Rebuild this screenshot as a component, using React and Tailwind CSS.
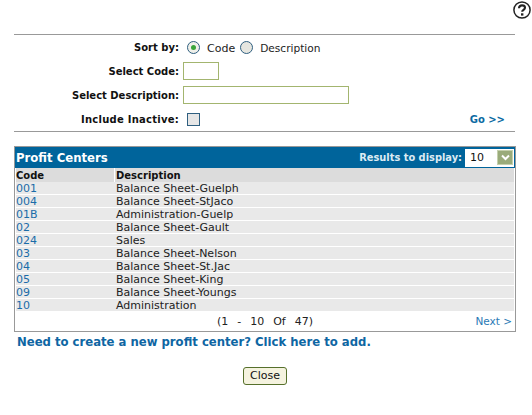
import React from "react";

const rows = [
  ["001", "Balance Sheet-Guelph"],
  ["004", "Balance Sheet-StJaco"],
  ["01B", "Administration-Guelp"],
  ["02", "Balance Sheet-Gault"],
  ["024", "Sales"],
  ["03", "Balance Sheet-Nelson"],
  ["04", "Balance Sheet-St.Jac"],
  ["05", "Balance Sheet-King"],
  ["09", "Balance Sheet-Youngs"],
  ["10", "Administration"],
];

function FormRow({ label, rowClass, labelClass, children }) {
  return (
    <div className={`flex items-center ${rowClass}`}>
      <div className={`w-[165px] text-right font-bold text-[#111] text-[10px] whitespace-nowrap ${labelClass}`}>{label}</div>
      {children}
    </div>
  );
}

function App() {
  return (
    <div className="w-[532px] h-[415px] bg-white overflow-hidden font-['DejaVu_Sans',sans-serif] text-[11px] leading-[13px] text-[#222]">
      {/* Help icon */}
      <div className="flex justify-end h-[34px] pt-[1px] pr-[1px]">
        <svg width="18" height="18" viewBox="0 0 18 18" fill="none">
          <circle cx="9" cy="9" r="8.1" stroke="#222" strokeWidth="1.5" />
          <path d="M6 7.2c0-1.8 1.3-2.8 3-2.8s3 1 3 2.4c0 2-2.8 2.1-2.8 4" stroke="#222" strokeWidth="2.1" />
          <rect x="8" y="12.3" width="2.4" height="2.3" fill="#222" />
        </svg>
      </div>

      <div className="ml-[14px] w-[501px] h-[98px] border-y border-[#999] relative">
        <FormRow label="Sort by:" rowClass="h-[24px]">
          <div className="flex items-center ml-[8px]">
            <span className="w-[13px] h-[13px] rounded-full border border-[#2f5f80] bg-[#f0f0ea] flex items-center justify-center">
              <span className="w-[5px] h-[5px] rounded-full bg-[#3aa53a]" />
            </span>
            <span className="ml-[7px] mt-[2px]">Code</span>
            <span className="ml-[5px] w-[13px] h-[13px] rounded-full border border-[#2f5f80] bg-[#e6e6e0]" />
            <span className="ml-[7px] mt-[2px] text-[10.6px]">Description</span>
          </div>
        </FormRow>
        <FormRow label="Select Code:" rowClass="h-[24px]">
          <div className="ml-[4px] w-[36px] h-[18px] border border-[#a3b56f] bg-white" />
        </FormRow>
        <FormRow label="Select Description:" rowClass="h-[24px]">
          <div className="ml-[4px] w-[166px] h-[18px] border border-[#a3b56f] bg-white" />
        </FormRow>
        <div className="flex items-center justify-between h-[24px]">
          <FormRow label="Include Inactive:" rowClass="" labelClass="tracking-[0.25px]">
            <span className="ml-[8px] w-[13px] h-[13px] border border-[#2f5f80] bg-[#e6e6e6]" />
          </FormRow>
          <a className="font-bold text-[#0b6aa2] text-[10px] mr-[10px]">Go &gt;&gt;</a>
        </div>
      </div>

      {/* Results panel */}
      <div className="ml-[14px] mt-[14px] w-[502px] h-[186px] border border-[#999]">
        <div className="h-[21px] bg-[#00649b] flex items-center justify-between pl-[1px] pr-[1px]">
          <span className="font-bold text-white text-[11.7px] pt-[1px]">Profit Centers</span>
          <div className="flex items-center">
            <span className="font-bold text-[#dcebf3] text-[9.85px] mr-[3px]">Results to display:</span>
            <div className="w-[49px] h-[18px] bg-white flex items-center justify-between pl-[5px] pr-[1px] text-[#111] text-[11px]">
              10
              <span className="w-[16px] h-[15px] bg-[#9aab7a] border border-[#c5d0ad] flex items-center justify-center">
                <svg width="9" height="7" viewBox="0 0 9 7" fill="none">
                  <path d="M1 1.5l3.5 3.5L8 1.5" stroke="#fff" strokeWidth="2" />
                </svg>
              </span>
            </div>
          </div>
        </div>
        <div className="flex h-[14px] mx-[1px] bg-[#dcdcdc] items-center font-bold text-[10px] text-[#111]">
          <div className="w-[99px] border-r border-white h-full flex items-center">Code</div>
          <div className="pl-[1px]">Description</div>
        </div>
        {rows.map((row) => (
          <div key={row[0]} className="flex h-[13px] mx-[1px] bg-[#e9e9e9] border-b border-white items-center text-[#222]">
            <a className="w-[100px] text-[#1b6ca8]">{row[0]}</a>
            <span>{row[1]}</span>
          </div>
        ))}
        <div className="flex items-center h-[19px] relative">
          <span className="mx-auto whitespace-pre [word-spacing:1px]">(1  -  10  Of  47)</span>
          <a className="absolute right-[3px] text-[10.5px] text-[#2a7ab5]">Next &gt;</a>
        </div>
      </div>

      <a className="block ml-[17px] mt-[3px] font-bold text-[11.67px] leading-[15px] text-[#0e66a3]">
        Need to create a new profit center? Click here to add.
      </a>

      <div className="flex justify-center mt-[17px] pr-[2px]">
        <button className="w-[44px] h-[18px] rounded-[3px] border border-[#56702b] bg-[#f5f3df] text-[11px] leading-[14px] text-[#111]">
          Close
        </button>
      </div>
    </div>
  );
}

export default App;
